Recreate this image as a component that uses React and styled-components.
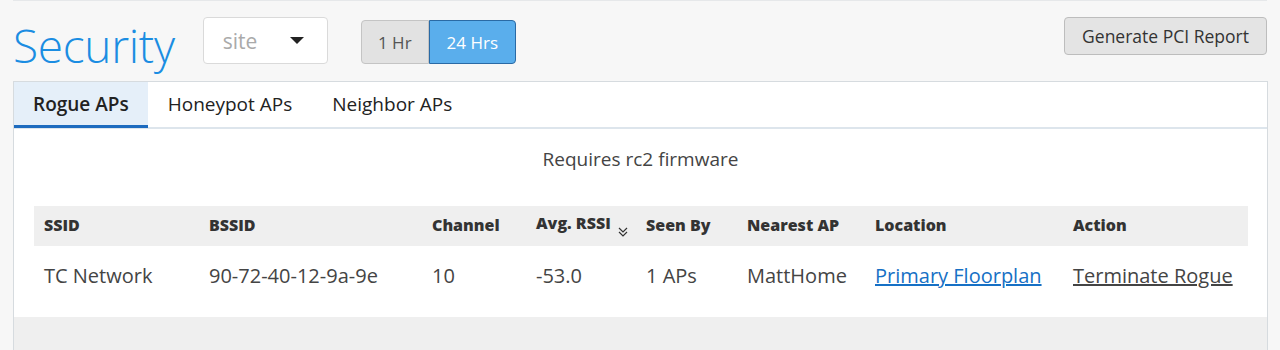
import React from "react"
import styled, { createGlobalStyle } from "styled-components"

const GlobalStyle = createGlobalStyle`
  html, body {
    margin: 0;
    padding: 0;
    background: #f7f7f7;
    font-family: "Open Sans", "Liberation Sans", sans-serif;
    color: #333;
  }
`

const Page = styled.div`
  width: 1280px;
  height: 350px;
  overflow: hidden;
  box-sizing: border-box;
  padding: 0 13px;
`

const TopRule = styled.div`
  height: 1px;
  width: 1254px;
  background: #e6e8ea;
`

const Header = styled.div`
  display: flex;
  align-items: flex-start;
  height: 80px;
`

const Title = styled.h1`
  margin: 15px 0 0 0;
  font-size: 46px;
  line-height: 58px;
  font-weight: 300;
  color: #1b8de2;
  letter-spacing: -0.3px;
`

const Select = styled.div`
  margin: 16px 0 0 28px;
  width: 125px;
  height: 47px;
  box-sizing: border-box;
  border: 1px solid #dadada;
  border-radius: 4px;
  background: #fff;
  display: flex;
  align-items: center;
  justify-content: space-between;
  padding: 0 23px 0 19px;
  font-size: 21px;
  color: #aaa;
`

const Caret = styled.span`
  width: 0;
  height: 0;
  border-left: 7px solid transparent;
  border-right: 7px solid transparent;
  border-top: 7px solid #222;
`

const Toggle = styled.div`
  display: flex;
  margin: 19px 0 0 33px;
  height: 44px;
`

const ToggleButton = styled.button`
  box-sizing: border-box;
  height: 44px;
  width: ${p => (p.$active ? "87px" : "68px")};
  padding: 0;
  font-family: inherit;
  font-size: 17px;
  border: 1px solid ${p => (p.$active ? "#2a6aa5" : "#c4c4c4")};
  background: ${p => (p.$active ? "#5aaeec" : "#e2e2e2")};
  color: ${p => (p.$active ? "#fff" : "#555")};
  border-radius: ${p => (p.$active ? "0 4px 4px 0" : "4px 0 0 4px")};
  cursor: pointer;
`

const ReportButton = styled.button`
  margin: 16px 0 0 auto;
  height: 38px;
  width: 203px;
  box-sizing: border-box;
  font-family: inherit;
  font-size: 17.5px;
  color: #333;
  background: #e4e4e4;
  border: 1px solid #bdbdbd;
  border-radius: 4px;
`

const Panel = styled.div`
  width: 1255px;
  box-sizing: border-box;
  border: 1px solid #d6dbdf;
  border-bottom: none;
  background: #fff;
`

const Tabs = styled.div`
  display: flex;
  height: 45px;
  border-bottom: 2px solid #dde5ec;
`

const Tab = styled.div`
  box-sizing: border-box;
  height: 46px;
  padding: 0 ${p => (p.$active ? "19px" : "20px")};
  display: flex;
  align-items: center;
  font-size: 19px;
  color: #222;
  font-weight: ${p => (p.$active ? 600 : 400)};
  background: ${p => (p.$active ? "#e5eff9" : "transparent")};
  border-bottom: 3px solid ${p => (p.$active ? "#1d6bbf" : "transparent")};
`

const Body = styled.div`
  padding: 0 20px;
`

const Notice = styled.div`
  text-align: center;
  font-size: 19px;
  color: #444;
  padding: 17px 0 0;
  box-sizing: border-box;
  height: 77px;
`

const Table = styled.table`
  width: 100%;
  border-collapse: collapse;
  table-layout: fixed;
`

const HeadRow = styled.tr`
  height: 40px;
  background: #efefef;
`

const HeadCell = styled.th`
  text-align: left;
  padding: 0 10px 3px;
  font-size: 16px;
  font-weight: 800;
  color: #333;
  white-space: nowrap;
  vertical-align: middle;
`

const SortIcon = styled.svg`
  width: 12px;
  height: 12px;
  margin-left: 6px;
  vertical-align: -9px;
`

const BodyRow = styled.tr`
  height: 71px;
`

const Cell = styled.td`
  padding: 16px 10px 0;
  vertical-align: top;
  font-size: 20px;
  color: #444;
  white-space: nowrap;
`

const Link = styled.a`
  color: ${p => (p.$plain ? "#444" : "#1670c5")};
  text-decoration: underline;
  cursor: pointer;
`

const Footer = styled.div`
  height: 40px;
  background: #efefef;
`

const columns = [
  { label: "SSID", width: 165 },
  { label: "BSSID", width: 223 },
  { label: "Channel", width: 104 },
  { label: "Avg. RSSI", width: 110, sorted: true },
  { label: "Seen By", width: 101 },
  { label: "Nearest AP", width: 128 },
  { label: "Location", width: 198 },
  { label: "Action", width: 185 },
]

export default function App() {
  return (
    <>
      <GlobalStyle />
      <Page>
        <TopRule />
        <Header>
          <Title>Security</Title>
          <Select>
            site
            <Caret />
          </Select>
          <Toggle>
            <ToggleButton>1 Hr</ToggleButton>
            <ToggleButton $active>24 Hrs</ToggleButton>
          </Toggle>
          <ReportButton>Generate PCI Report</ReportButton>
        </Header>
        <Panel>
          <Tabs>
            <Tab $active>Rogue APs</Tab>
            <Tab>Honeypot APs</Tab>
            <Tab>Neighbor APs</Tab>
          </Tabs>
          <Body>
            <Notice>Requires rc2 firmware</Notice>
            <Table>
              <colgroup>
                {columns.map(c => (
                  <col key={c.label} style={{ width: c.width }} />
                ))}
              </colgroup>
              <thead>
                <HeadRow>
                  {columns.map(c => (
                    <HeadCell key={c.label}>
                      {c.label}
                      {c.sorted && (
                        <SortIcon viewBox="0 0 12 12" fill="none" stroke="#333" strokeWidth="1.2">
                          <path d="M2 2 L6 6 L10 2" />
                          <path d="M2 6 L6 10 L10 6" />
                        </SortIcon>
                      )}
                    </HeadCell>
                  ))}
                </HeadRow>
              </thead>
              <tbody>
                <BodyRow>
                  <Cell>TC Network</Cell>
                  <Cell>90-72-40-12-9a-9e</Cell>
                  <Cell>10</Cell>
                  <Cell>-53.0</Cell>
                  <Cell>1 APs</Cell>
                  <Cell>MattHome</Cell>
                  <Cell><Link>Primary Floorplan</Link></Cell>
                  <Cell><Link $plain>Terminate Rogue</Link></Cell>
                </BodyRow>
              </tbody>
            </Table>
          </Body>
          <Footer />
        </Panel>
      </Page>
    </>
  )
}
